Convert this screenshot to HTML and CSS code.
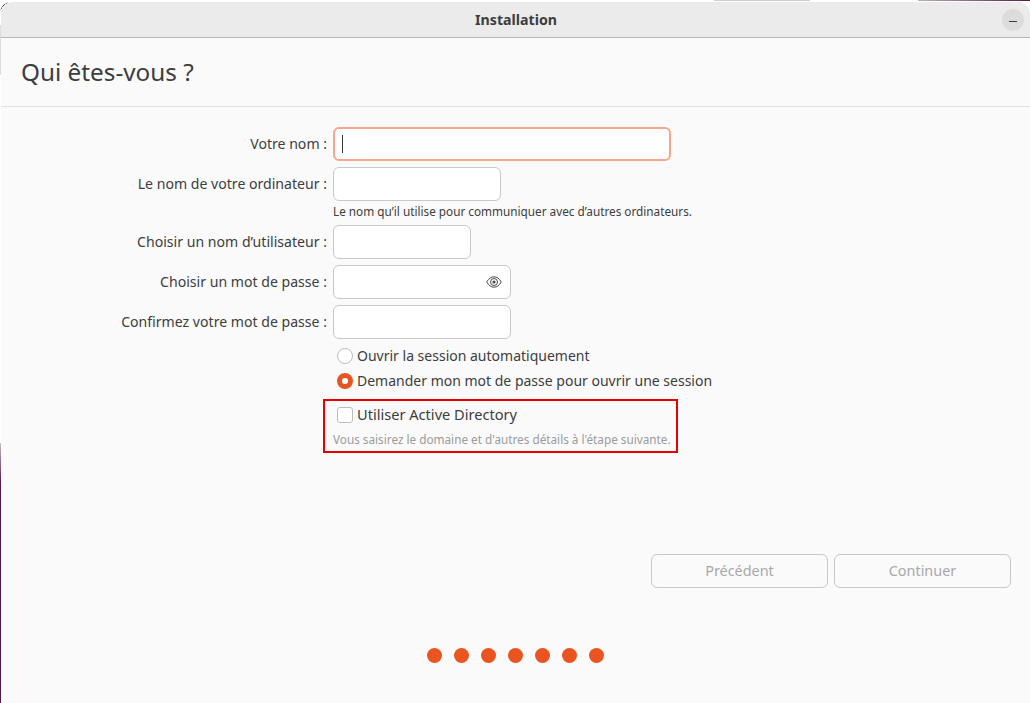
FILE: index.html
```html
<!DOCTYPE html>
<html>

<head>
    <title>Installation</title>
    <meta charset="utf-8" />
    <link rel="stylesheet" href="styles.css">
</head>

<body>

    <div class="window">
        <div class="titlebar">
            <div class="titlebarName">Installation</div>
            <div class="minimize"><span></span></div>
        </div>

        <div class="heading">Qui êtes-vous ?</div>

        <div class="content">
            <div class="form">
                <div class="label">Votre nom :</div>
                <div class="field fieldFocus"><span class="caret"></span></div>

                <div class="label">Le nom de votre ordinateur :</div>
                <div class="field fieldComputer"></div>
                <div class="hint">Le nom qu’il utilise pour communiquer avec d’autres ordinateurs.</div>

                <div class="label">Choisir un nom d’utilisateur :</div>
                <div class="field fieldUser"></div>

                <div class="label">Choisir un mot de passe :</div>
                <div class="field fieldPass">
                    <svg class="eye" width="16" height="12" viewBox="0 0 16 12">
                        <path d="M0.700 6C2.800 2.400 5.200 0.800 8 0.800s5.200 1.600 7.300 5.200c-2.100 3.600-4.500 5.200-7.300 5.200S2.800 9.600 0.700 6z" fill="none" stroke="#4a4a4a" stroke-width="1" />
                        <circle cx="8" cy="6" r="3.500" fill="none" stroke="#4a4a4a" stroke-width="1" />
                        <circle cx="8" cy="6" r="1.600" fill="#4a4a4a" />
                    </svg>
                </div>

                <div class="label">Confirmez votre mot de passe :</div>
                <div class="field fieldPass"></div>

                <div class="options">
                    <div class="option">
                        <span class="radio"></span>
                        <span>Ouvrir la session automatiquement</span>
                    </div>
                    <div class="option">
                        <span class="radio radioOn"></span>
                        <span>Demander mon mot de passe pour ouvrir une session</span>
                    </div>
                </div>

                <div class="activeDirectory">
                    <div class="option">
                        <span class="checkbox"></span>
                        <span class="checkboxText">Utiliser Active Directory</span>
                    </div>
                    <div class="adHint">Vous saisirez le domaine et d'autres détails à l'étape suivante.</div>
                </div>
            </div>

            <div class="buttons">
                <button type="button" disabled>Précédent</button>
                <button type="button" disabled>Continuer</button>
            </div>
        </div>

        <div class="dots">
            <span></span>
            <span></span>
            <span></span>
            <span></span>
            <span></span>
            <span></span>
            <span></span>
        </div>
    </div>

</body>

</html>
```

FILE: styles.css
```css
html,
body {
    height: 100%;
}

body {
    margin: 0;
    overflow: hidden;
    box-sizing: border-box;
    padding: 2px 0 0 1px;
    font-family: "Noto Sans", sans-serif;
    font-size: 14px;
    color: #3d3d3d;
    background-color: #ffffff;
    background-image:
        radial-gradient(circle at 12px 12px, transparent 11.500px, #5a1846 12px, transparent 12.500px),
        radial-gradient(circle at 0 12px, transparent 11.500px, #5a1846 12px, transparent 12.500px),
        linear-gradient(#dddddd, #dddddd),
        linear-gradient(#c4bcc2, #5a1846),
        linear-gradient(#5a1846, #5a1846),
        linear-gradient(#cfcfcf, #cfcfcf),
        linear-gradient(90deg, #b9aeb6, #5a1846);
    background-size: 8px 8px, 14px 8px, 1px 50px, 1px 40px, 1px 220px, 96px 1px, 112px 1px;
    background-position: 0 2px, 1016px 2px, 0 25px, 0 443px, 0 483px, 714px 0, 918px 0;
    background-repeat: no-repeat;
}

div.window {
    height: 701px;
    display: flex;
    flex-direction: column;
    background-color: #fafafa;
    border-radius: 12px 12px 0 0;
    overflow: hidden;
}

div.titlebar {
    flex: none;
    height: 35px;
    display: flex;
    align-items: center;
    justify-content: center;
    background-color: #ebebeb;
    border-bottom: 1px solid #b6b6b6;
    position: relative;
}

div.titlebarName {
    font-weight: bold;
    font-size: 14.200px;
    margin-left: 1px;
}

div.minimize {
    position: absolute;
    right: 6px;
    top: 7px;
    width: 22px;
    height: 22px;
    border-radius: 50%;
    background-color: #dcdcdc;
}

div.minimize span {
    display: block;
    width: 8px;
    height: 1px;
    margin: 12px auto 0 auto;
    background-color: #3d3d3d;
}

div.heading {
    flex: none;
    height: 68px;
    line-height: 68px;
    padding-left: 20px;
    font-size: 24.300px;
    border-bottom: 1px solid #e2e2e2;
}

div.content {
    flex: 1;
    display: flex;
    flex-direction: column;
    padding-top: 20px;
}

div.form {
    display: grid;
    grid-template-columns: 326px 1fr;
    column-gap: 6px;
    row-gap: 6px;
    align-items: center;
    justify-items: start;
}

div.label {
    justify-self: end;
    font-size: 14.100px;
    padding-bottom: 2px;
}

div.field {
    box-sizing: border-box;
    height: 34px;
    width: 178px;
    display: flex;
    align-items: center;
    background-color: #ffffff;
    border: 1px solid #c8c8c8;
    border-radius: 6px;
}

div.fieldFocus {
    width: 338px;
    border: 2px solid #f4a78f;
}

div.fieldComputer {
    width: 168px;
}

div.fieldUser {
    width: 138px;
}

div.fieldPass {
    justify-content: flex-end;
}

span.caret {
    width: 1px;
    height: 18px;
    margin-left: 7px;
    background-color: #333333;
}

svg.eye {
    margin-right: 8px;
    margin-bottom: 1px;
}

div.hint {
    grid-column: 2;
    font-size: 11.750px;
    line-height: 16px;
    margin-top: -4px;
}

div.options {
    grid-column: 2;
    padding-left: 4px;
    margin-top: -2px;
    margin-bottom: 6px;
}

div.option {
    height: 25px;
    display: flex;
    align-items: center;
    gap: 4px;
}

span.radio {
    box-sizing: border-box;
    width: 16px;
    height: 16px;
    background-color: #ffffff;
    border: 1px solid #bdbdbd;
    border-radius: 50%;
}

span.radioOn {
    background-color: #e95420;
    border: 5px solid #e95420;
    background-clip: padding-box;
}

span.radioOn::after {
    content: "";
    display: block;
    width: 6px;
    height: 6px;
    border-radius: 50%;
    background-color: #ffffff;
}

span.checkbox {
    box-sizing: border-box;
    width: 16px;
    height: 16px;
    background-color: #ffffff;
    border: 1px solid #bdbdbd;
    border-radius: 3px;
}

span.checkboxText {
    font-size: 14.600px;
    padding-bottom: 2px;
}

div.activeDirectory {
    grid-column: 2;
    box-sizing: border-box;
    width: 355px;
    height: 54px;
    margin-left: -10px;
    margin-top: -6px;
    padding: 1px 0 0 12px;
    border: 2px solid #e60000;
}

div.adHint {
    font-size: 11.750px;
    line-height: 16px;
    margin-top: 4px;
    margin-left: -4px;
    color: #9a9a9a;
}

div.buttons {
    display: flex;
    justify-content: flex-end;
    gap: 6px;
    margin-top: 101px;
    padding-right: 19px;
}

div.buttons button {
    box-sizing: border-box;
    width: 177px;
    height: 34px;
    padding-bottom: 3px;
    font-family: inherit;
    font-size: 14.400px;
    color: #a8a8a8;
    background-color: #fafafa;
    border: 1px solid #c8c8c8;
    border-radius: 6px;
}

div.dots {
    flex: none;
    display: flex;
    justify-content: center;
    gap: 12px;
    height: 55px;
}

div.dots span {
    width: 15px;
    height: 15px;
    border-radius: 50%;
    background-color: #e95420;
}
```
